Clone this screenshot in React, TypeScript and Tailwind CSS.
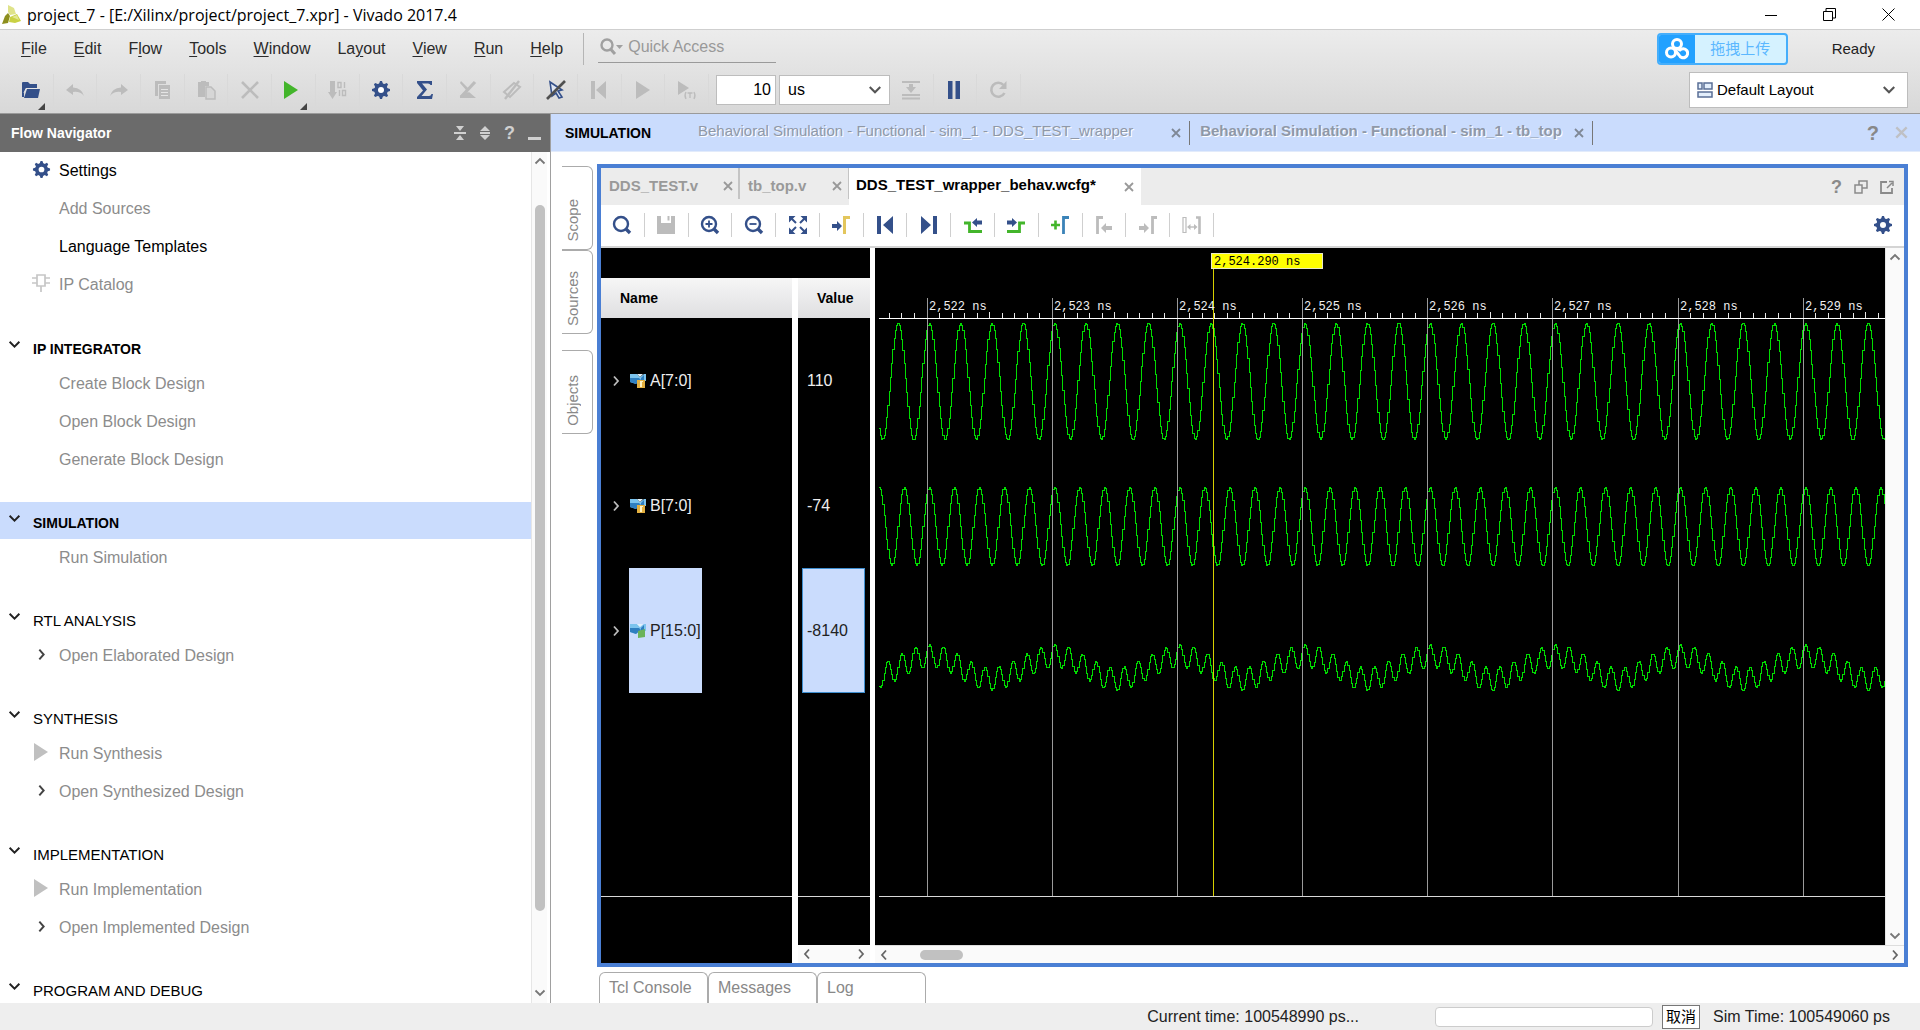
import type { ReactNode } from "react";

const NAVY = "#34508a";
const GREY = "#bcbcbc";
const GREEN = "#43b52b";

interface IconProps {
  children: ReactNode;
  size?: number;
}

const Icon = ({ children, size = 20 }: IconProps) => (
  <svg width={size} height={size} viewBox="0 0 20 20" fill="none" className="shrink-0" aria-hidden="true">
    {children}
  </svg>
);

const Gear = ({ size = 20 }: { size?: number }) => (
  <Icon size={size}>
    <g fill={NAVY}>
      {[0, 45, 90, 135].map((a) => (
        <path key={a} d="M8 4 L9 1 H11 L12 4 V16 L11 19 H9 L8 16 Z" transform={`rotate(${a} 10 10)`} />
      ))}
      <circle cx="10" cy="10" r="6.8" />
    </g>
    <circle cx="10" cy="10" r="3" fill="#fff" />
  </Icon>
);

const Chevron = ({ dir, color = "#555", size = 12 }: { dir: "up" | "down" | "left" | "right"; color?: string; size?: number }) => {
  const paths = {
    up: "M1.5 8.5 L6 4 L10.5 8.5",
    down: "M1.5 3.5 L6 8 L10.5 3.5",
    left: "M8 1.5 L4 6 L8 10.5",
    right: "M4 1.5 L8 6 L4 10.5",
  };
  return (
    <svg width={size} height={size} viewBox="0 0 12 12" fill="none" className="shrink-0" aria-hidden="true">
      <path d={paths[dir]} stroke={color} strokeWidth="1.8" />
    </svg>
  );
};

const Cross = ({ color = "#999", size = 10 }: { color?: string; size?: number }) => (
  <svg width={size} height={size} viewBox="0 0 10 10" aria-hidden="true">
    <path d="M1 1 L9 9 M9 1 L1 9" stroke={color} strokeWidth="1.8" />
  </svg>
);

const Logo = () => (
  <svg width="20" height="20" viewBox="0 0 20 20" aria-hidden="true">
    <path d="M6 0 L12 3 L14 9 L8 10 L6 7 Z" fill="#dfe38a" />
    <path d="M6 8 L8 11 L6 18 L0 19 L3 11 Z" fill="#8d8f1e" />
    <path d="M8 12 L15 9 L19 16 L13 18 L7 17 Z" fill="#c9d144" />
    <path d="M10 12 L15 10 L17 15 Z" fill="#e3e792" />
  </svg>
);

const menus = [
  ["", "F", "ile"],
  ["", "E", "dit"],
  ["F", "l", "ow"],
  ["", "T", "ools"],
  ["", "W", "indow"],
  ["La", "y", "out"],
  ["", "V", "iew"],
  ["", "R", "un"],
  ["", "H", "elp"],
];

const mainTools: { label: string; menu?: boolean; icon: ReactNode }[] = [
  {
    label: "Open",
    menu: true,
    icon: (
      <Icon>
        <path d="M1 3 Q1 2 2 2 H7 L9 4 H16 V8 H5 L3 13 V17 H1 Z" fill={NAVY} />
        <path d="M6 9 H19 L17 18 H3 Z" fill={NAVY} />
        <path d="M3 13 L5 8.5 H17" stroke="#e4e4e4" />
      </Icon>
    ),
  },
  {
    label: "Undo",
    icon: (
      <Icon>
        <path d="M8 4 L1 10 L8 15 V12 Q15 11 19 16 Q17 8 8 7.5 Z" fill={GREY} />
      </Icon>
    ),
  },
  {
    label: "Redo",
    icon: (
      <Icon>
        <path d="M12 4 L19 10 L12 15 V12 Q5 11 1 16 Q3 8 12 7.5 Z" fill={GREY} />
      </Icon>
    ),
  },
  {
    label: "Copy",
    icon: (
      <Icon>
        <path d="M3 1 H14 V4 H6 V16 H3 Z M7 5 H18 V19 H7 Z" fill={GREY} />
        <path d="M9 9.5 H16 M9 12.5 H16 M9 15.5 H16" stroke="#e4e4e4" />
      </Icon>
    ),
  },
  {
    label: "Paste",
    icon: (
      <Icon>
        <path d="M2 2 H5 V1 H10 V2 H13 V6 H9 V17 H2 Z" fill={GREY} />
        <path d="M10 7 H15 L19 11 V19 H10 Z" fill="#d6d6d6" stroke={GREY} strokeWidth="1.5" />
      </Icon>
    ),
  },
  {
    label: "Delete",
    icon: (
      <Icon>
        <path d="M2 2 L18 18 M18 2 L2 18" stroke={GREY} strokeWidth="2.6" />
      </Icon>
    ),
  },
  {
    label: "Run",
    menu: true,
    icon: (
      <Icon>
        <path d="M1 1 L15 10 L1 19 Z" fill={GREEN} />
      </Icon>
    ),
  },
  {
    label: "Program device",
    icon: (
      <Icon>
        <path d="M3 1 H8 V12 H10 L5.5 19 L1 12 H3 Z" fill={GREY} />
        <path d="M11 2.5 H14 V7.5 H11 Z M17.5 2 V8 M12.5 10 V16 M15.5 10.5 H18.5 V15.5 H15.5 Z" stroke={GREY} strokeWidth="1.4" />
      </Icon>
    ),
  },
  { label: "Settings", icon: <Gear /> },
  {
    label: "Report",
    icon: (
      <Icon>
        <path d="M2 1 H17 V5 H15.5 Q15 3.500 13 3.500 H7 L12 9.500 L6.5 16 H14 Q16 16 16.5 14 H18 L17 19 H2 V17 L8 10.5 L2 3 Z" fill={NAVY} />
      </Icon>
    ),
  },
  {
    label: "Clear edits",
    icon: (
      <Icon>
        <path d="M3 1 L11 9 L4 16 L11 12 L18 18 H2 V16 L8 10 L2 3 Z" fill={GREY} />
        <path d="M9 12 L17 18 H4 Z" fill={GREY} />
        <path d="M17 2 L3 17" stroke={GREY} strokeWidth="3.2" />
      </Icon>
    ),
  },
  {
    label: "Highlight",
    icon: (
      <Icon>
        <path d="M2 12 L12 3 L18 7 L8 17 Z" stroke={GREY} strokeWidth="2" />
        <path d="M17 1 L3 19" stroke={GREY} strokeWidth="2.4" />
      </Icon>
    ),
  },
  {
    label: "Unselect",
    icon: (
      <Icon>
        <path d="M4 2 L16 10 L12 11 L16 17 L13 18 L10 13 L6 16 Z" fill="#dfe6f3" stroke={NAVY} strokeWidth="1.6" />
        <path d="M19 1 L1 19" stroke="#505050" strokeWidth="2.6" />
      </Icon>
    ),
  },
  {
    label: "Restart",
    icon: (
      <Icon>
        <path d="M2 1 H6 V19 H2 Z M17 1 V19 L7 10 Z" fill={GREY} />
      </Icon>
    ),
  },
  {
    label: "Run all",
    icon: (
      <Icon>
        <path d="M3 1 L17 10 L3 19 Z" fill={GREY} />
      </Icon>
    ),
  },
  {
    label: "Run for time",
    icon: (
      <Icon>
        <path d="M1 1 L12 8 L1 15 Z" fill={GREY} />
        <path d="M9 12 Q7 15.5 9 19 M17 12 Q19 15.5 17 19 M10.5 13 H15.5 M13 13 V18" stroke={GREY} strokeWidth="1.3" />
      </Icon>
    ),
  },
];

const simTools: { label: string; icon: ReactNode }[] = [
  {
    label: "Step",
    icon: (
      <Icon>
        <path d="M1 2 H19 M1 15 H19 M1 18.5 H19" stroke={GREY} strokeWidth="1.8" />
        <path d="M8 4 H12 V7 H15 L10 13 L5 7 H8 Z" fill={GREY} />
      </Icon>
    ),
  },
  {
    label: "Break",
    icon: (
      <Icon>
        <path d="M3 1 H7.5 V19 H3 Z M10.5 1 H15 V19 H10.5 Z" fill={NAVY} />
      </Icon>
    ),
  },
  {
    label: "Relaunch",
    icon: (
      <Icon>
        <path d="M14.5 5 A7 7 0 1 0 15.5 13" stroke={GREY} strokeWidth="2.6" />
        <path d="M17.5 1 V9 H10 Z" fill={GREY} />
      </Icon>
    ),
  },
];

const Lens = ({ mark }: { mark?: string }) => (
  <Icon>
    <circle cx="9" cy="9" r="7" stroke={NAVY} strokeWidth="2.4" />
    <path d="M13.5 13.5 L18 18" stroke={NAVY} strokeWidth="3.4" />
    {mark && <path d={mark} stroke={NAVY} strokeWidth="1.8" />}
  </Icon>
);

const waveTools: { label: string; icon: ReactNode }[] = [
  { label: "Find", icon: <Lens /> },
  {
    label: "Save",
    icon: (
      <Icon>
        <path d="M1 1 H5 V8 H15 V1 H19 V19 H1 Z" fill={GREY} />
        <path d="M12.5 1 V5.5" stroke={GREY} strokeWidth="2" />
      </Icon>
    ),
  },
  { label: "Zoom in", icon: <Lens mark="M9 5.5 V12.5 M5.5 9 H12.5" /> },
  { label: "Zoom out", icon: <Lens mark="M5.5 9 H12.5" /> },
  {
    label: "Zoom fit",
    icon: (
      <Icon>
        <path d="M1 1 H7.5 L1 7.5 Z M19 1 V7.5 L12.5 1 Z M1 19 V12.5 L7.5 19 Z M19 19 H12.5 L19 12.5 Z" fill={NAVY} />
        <path d="M3 3 L8 8 M17 3 L12 8 M3 17 L8 12 M17 17 L12 12" stroke={NAVY} strokeWidth="2" />
      </Icon>
    ),
  },
  {
    label: "Go to cursor",
    icon: (
      <Icon>
        <path d="M1 9 H6 V6 L11 11 L6 16 V13 H1 Z" fill={NAVY} />
        <path d="M19 2.5 H13.5 V19" stroke="#e3c65c" strokeWidth="3" />
      </Icon>
    ),
  },
  {
    label: "Go to time 0",
    icon: (
      <Icon>
        <path d="M2 1 H6 V19 H2 Z M18 1 V19 L8 10 Z" fill={NAVY} />
      </Icon>
    ),
  },
  {
    label: "Go to last time",
    icon: (
      <Icon>
        <path d="M14 1 H18 V19 H14 Z M2 1 V19 L12 10 Z" fill={NAVY} />
      </Icon>
    ),
  },
  {
    label: "Previous transition",
    icon: (
      <Icon>
        <path d="M1 8 H6.5 V16.5 H19" stroke={GREEN} strokeWidth="2.8" />
        <path d="M9 7.5 L14 3 V5.5 H19 V9.5 H14 V12 Z" fill={NAVY} />
      </Icon>
    ),
  },
  {
    label: "Next transition",
    icon: (
      <Icon>
        <path d="M1 16.5 H13.5 V8 H19" stroke={GREEN} strokeWidth="2.8" />
        <path d="M11 7.5 L6 3 V5.5 H1 V9.5 H6 V12 Z" fill={NAVY} />
      </Icon>
    ),
  },
  {
    label: "Add marker",
    icon: (
      <Icon>
        <path d="M1 10 H10 M5.5 5.5 V14.5" stroke={GREEN} strokeWidth="2.6" />
        <path d="M19 2.5 H13.5 V19" stroke="#3b83b8" strokeWidth="2.8" />
      </Icon>
    ),
  },
  {
    label: "Previous marker",
    icon: (
      <Icon>
        <path d="M9 2.5 H3.5 V19" stroke={GREY} strokeWidth="2.8" />
        <path d="M7 13 L12 8 V11 H18 V15 H12 V18 Z" fill={GREY} />
      </Icon>
    ),
  },
  {
    label: "Next marker",
    icon: (
      <Icon>
        <path d="M19 2.5 H14.5 V19" stroke={GREY} strokeWidth="2.8" />
        <path d="M11 13 L6 8 V11 H1 V15 H6 V18 Z" fill={GREY} />
      </Icon>
    ),
  },
  {
    label: "Swap cursors",
    icon: (
      <Icon>
        <path d="M1 2.5 H4 V17.5 H1 Z" stroke={GREY} strokeWidth="1.2" />
        <path d="M14 2.5 H17.5 V19" stroke={GREY} strokeWidth="2.6" />
        <path d="M6 12 H14" stroke={GREY} strokeWidth="1.4" />
        <path d="M5 12 L8.5 9 V15 Z M15.5 12 L12 9 V15 Z" fill={GREY} />
      </Icon>
    ),
  },
];

const Play = () => (
  <svg width="16" height="18" viewBox="0 0 16 18" aria-hidden="true">
    <path d="M1 0 L15 9 L1 18 Z" fill="#c0c0c0" />
  </svg>
);

const Chip = () => (
  <svg width="18" height="20" viewBox="0 0 18 20" fill="none" aria-hidden="true">
    <path d="M5 2 H13 V13 H5 Z M0 5 H5 M0 10 H5 M13 5 H18 M13 10 H18 M9 13 V19" stroke="#c6c6c6" strokeWidth="1.7" />
  </svg>
);

interface NavItem {
  label: string;
  icon?: ReactNode;
  enabled?: boolean;
}

const topItems: NavItem[] = [
  { label: "Settings", icon: <Gear size={19} />, enabled: true },
  { label: "Add Sources" },
  { label: "Language Templates", enabled: true },
  { label: "IP Catalog", icon: <Chip /> },
];

const arrow = <Chevron dir="right" color="#444" size={13} />;

const sections: { title: string; bold?: boolean; active?: boolean; items: NavItem[] }[] = [
  {
    title: "IP INTEGRATOR",
    bold: true,
    items: [{ label: "Create Block Design" }, { label: "Open Block Design" }, { label: "Generate Block Design" }],
  },
  { title: "SIMULATION", bold: true, active: true, items: [{ label: "Run Simulation" }] },
  { title: "RTL ANALYSIS", items: [{ label: "Open Elaborated Design", icon: arrow }] },
  {
    title: "SYNTHESIS",
    items: [
      { label: "Run Synthesis", icon: <Play /> },
      { label: "Open Synthesized Design", icon: arrow },
    ],
  },
  {
    title: "IMPLEMENTATION",
    items: [
      { label: "Run Implementation", icon: <Play /> },
      { label: "Open Implemented Design", icon: arrow },
    ],
  },
  { title: "PROGRAM AND DEBUG", items: [] },
];

const NavRow = ({ label, icon, enabled }: NavItem) => (
  <button type="button" className="flex h-[38px] w-full items-center pl-8 text-left">
    <span className="flex w-[27px] items-center pb-1">
      <span className="flex w-[18px] justify-center">{icon}</span>
    </span>
    <span className={enabled ? "text-black" : "text-[#8c8c8c]"}>{label}</span>
  </button>
);

const TitleBar = () => (
  <header className="flex h-[30px] shrink-0 items-center border-b border-[#cfcfcf] bg-white pr-[25px] pl-[2px]">
    <Logo />
    <h1 className="flex-1 pl-[5px] font-['Open_Sans','Noto_Sans',sans-serif] text-[16px] text-black">
      project_7 - [E:/Xilinx/project/project_7.xpr] - Vivado 2017.4
    </h1>
    <div className="flex items-center gap-[46px]">
      <button type="button" aria-label="Minimize">
        <svg width="12" height="12" viewBox="0 0 12 12"><path d="M0 6.5 H12" stroke="#000" /></svg>
      </button>
      <button type="button" aria-label="Restore">
        <svg width="13" height="13" viewBox="0 0 13 13" fill="none">
          <path d="M0.5 3.5 H9.5 V12.5 H0.5 Z M3 3 V0.5 H12.5 V10 H10" stroke="#000" />
        </svg>
      </button>
      <button type="button" aria-label="Close">
        <svg width="13" height="13" viewBox="0 0 13 13"><path d="M0.5 0.5 L12.5 12.5 M12.5 0.5 L0.5 12.5" stroke="#000" /></svg>
      </button>
    </div>
  </header>
);

const MenuBar = () => (
  <div className="flex h-[38px] items-center">
    <nav className="flex gap-[27px] pl-[21px]">
      {menus.map(([before, key, after]) => (
        <button key={before + key + after} type="button" className="leading-6 text-[#2b2b2b]">
          {before}
          <span className="underline underline-offset-2">{key}</span>
          {after}
        </button>
      ))}
    </nav>
    <div className="ml-5 h-8 w-px bg-[#b5b5b5]" />
    <label className="ml-[14px] flex h-7 w-[178px] items-center border-b border-[#9a9a9a] pb-1 pl-[2px]">
      <svg width="24" height="18" viewBox="0 0 24 18" fill="none" aria-hidden="true">
        <circle cx="7" cy="7" r="5.5" stroke="#a0a0a0" strokeWidth="2.4" />
        <path d="M10.5 11 L15 16" stroke="#a0a0a0" strokeWidth="3" />
        <path d="M16 7 H23 L19.5 11 Z" fill="#a0a0a0" />
      </svg>
      <input type="text" aria-label="Quick Access" placeholder="Quick Access" className="ml-1 h-6 w-36 bg-transparent placeholder:text-[#999] outline-none" />
    </label>
    <div className="flex-1" />
    <button type="button" className="flex h-8 w-[131px] overflow-hidden rounded border-2 border-[#45aefb] bg-[#d5f2ff] text-[#5cb8ff]">
      <span className="flex h-full w-9 items-center justify-center bg-[#22a1ff]">
        <svg width="24" height="22" viewBox="0 0 24 22" fill="none" aria-hidden="true">
          <circle cx="12" cy="6" r="4.5" stroke="#fff" strokeWidth="3" />
          <circle cx="6" cy="14.5" r="4.5" stroke="#fff" strokeWidth="3" />
          <path d="M11 10 L15 12 A4.5 4.5 0 1 1 14 17 L10 12" stroke="#fff" strokeWidth="3" />
        </svg>
      </span>
      <span className="flex-1 self-center text-center text-[15px]">拖拽上传</span>
    </button>
    <span className="mr-[45px] ml-11 text-[15px] text-[#222]">Ready</span>
  </div>
);

const ToolBar = () => (
  <div className="flex h-[45px] items-center pr-3 pb-px pl-[10px]">
    <div className="grid w-[699px] grid-cols-[repeat(16,1fr)]">
      {mainTools.map(({ label, icon, menu }) => (
        <button key={label} type="button" aria-label={label} className="relative flex h-8 items-center justify-center border-r border-[#d9d9d9]">
          {icon}
          {menu && (
            <svg width="7" height="7" viewBox="0 0 7 7" className="absolute right-2 -bottom-1" aria-hidden="true">
              <path d="M7 0 V7 H0 Z" fill="#444" />
            </svg>
          )}
        </button>
      ))}
    </div>
    <input type="text" aria-label="Run time" defaultValue="10" className="ml-[7px] h-[30px] w-[60px] border border-[#bdbdbd] bg-white pr-1 text-right text-black outline-none" />
    <div className="relative ml-[3px]">
      <select aria-label="Time unit" className="h-[30px] w-[111px] appearance-none border border-[#bdbdbd] bg-white pl-2 text-black">
        <option>us</option>
      </select>
      <span className="pointer-events-none absolute top-2 right-2">
        <Chevron dir="down" size={14} />
      </span>
    </div>
    <div className="grid w-[131px] grid-cols-3">
      {simTools.map(({ label, icon }) => (
        <button key={label} type="button" aria-label={label} className="flex h-8 items-center justify-center border-r border-[#d9d9d9]">
          {icon}
        </button>
      ))}
    </div>
    <div className="flex-1" />
    <div className="relative">
      <svg width="16" height="16" viewBox="0 0 16 16" fill="#e3eefb" className="absolute top-[10px] left-2" aria-hidden="true">
        <path d="M1 1 H5 V7 H1 Z M7 1 H15 V7 H7 Z M1 10 H15 V15 H1 Z" stroke="#5a6f96" strokeWidth="1.5" />
      </svg>
      <select aria-label="Layout" className="h-9 w-[219px] appearance-none border border-[#bdbdbd] bg-white pl-[27px] text-[15px] text-black">
        <option>Default Layout</option>
      </select>
      <span className="pointer-events-none absolute top-[11px] right-3">
        <Chevron dir="down" size={14} />
      </span>
    </div>
  </div>
);

const FlowNavigator = () => (
  <aside className="flex w-[551px] shrink-0 flex-col border-r border-[#a0a0a0] bg-white">
    <div className="flex h-[38px] shrink-0 items-center bg-[#6b6b6b] pr-[9px] pb-px pl-[11px] text-[#e8e8e8]">
      <h2 className="flex-1 text-[14px] font-bold text-white">Flow Navigator</h2>
      <div className="flex items-center gap-[13px]">
        <button type="button" aria-label="Collapse all">
          <svg width="12" height="14" viewBox="0 0 12 14" fill="#d0d0d0"><path d="M2 0 H10 L6 5 Z M0 6 H12 V8 H0 Z M6 9 L10 14 H2 Z" /></svg>
        </button>
        <button type="button" aria-label="Expand all">
          <svg width="12" height="14" viewBox="0 0 12 14" fill="#d0d0d0"><path d="M6 0 L11 5 H1 Z M1 6 H11 V8 H1 Z M1 9 H11 L6 14 Z" /></svg>
        </button>
        <button type="button" className="text-lg font-bold text-[#d0d0d0]">?</button>
        <button type="button" aria-label="Minimize panel" className="mt-3 h-[3px] w-[13px] bg-[#d0d0d0]" />
      </div>
    </div>
    <div className="flex min-h-0 flex-1">
      <nav className="min-w-0 flex-1 overflow-hidden">
        <div className="mb-6">
          {topItems.map((item) => (
            <NavRow key={item.label} {...item} />
          ))}
        </div>
        {sections.map(({ title, bold, active, items }) => (
          <section key={title} className="mb-[23px]">
            <button type="button" className={`flex h-[37px] w-full items-center pl-2 text-left text-black ${active ? "bg-[#cadcfd]" : ""}`}>
              <span className="pb-1">
                <Chevron dir="down" color="#222" size={13} />
              </span>
              <span className={`pt-1 pl-3 ${bold ? "text-[14px] font-bold" : "text-[15px]"}`}>{title}</span>
            </button>
            {items.map((item) => (
              <NavRow key={item.label} {...item} />
            ))}
          </section>
        ))}
      </nav>
      <div className="mr-[3px] flex w-4 flex-col items-center border-l border-[#e6e6e6] bg-[#fafafa] pt-[3px] pb-1">
        <Chevron dir="up" color="#777" />
        <div className="mt-[38px] h-[706px] w-[10px] rounded-full bg-[#c1c1c1]" />
        <div className="flex-1" />
        <Chevron dir="down" color="#777" />
      </div>
    </div>
  </aside>
);

// Waveform canvas, in pixels: one nanosecond is NS wide, the first grid line is at X0
const NS = 125.17;
const X0 = 52;
const LEFT = 4;
const SPAN = 2400;
const times = Array.from({ length: 8 }, (_, i) => 2522 + i);

const trace = (mid: number, amp: number, fn: (t: number) => number) => {
  let d = "";
  for (let x = LEFT; x < SPAN; x += 1.25) {
    const t = ((x - X0 - 2) / NS) * 2 * Math.PI;
    const y = Math.round(mid - amp * fn(t)) + 0.5;
    d += d ? `H${x}V${y}` : `M${x} ${y}`;
  }
  return d;
};

const traces = [
  trace(133, 58, (t) => Math.cos(4 * t)),
  trace(278, 39, (t) => Math.cos(5 * t)),
  trace(419, 23, (t) => Math.cos(4 * t) * Math.cos(5 * t)),
];

const minorTicks = Array.from({ length: 190 }, (_, i) => i - 3).filter((i) => i % 10 !== 0);

const Waveform = () => (
  <svg className="h-full w-full bg-black" role="img" aria-label="Waveform">
    <g shapeRendering="crispEdges">
      {traces.map((d, i) => (
        <path key={i} d={d} fill="none" stroke="#00dc00" strokeWidth="1" />
      ))}
      {minorTicks.map((i) => (
        <rect key={i} x={Math.floor(X0 + (i * NS) / 10)} y={i % 5 === 0 ? 64 : 65} width="1" height="6" fill="#e8e8e8" />
      ))}
      {times.map((t, i) => (
        <rect key={t} x={Math.floor(X0 + i * NS)} y="50" width="1" height="598" fill="#9a9a9a" />
      ))}
      <rect x={LEFT} y="70" width={SPAN} height="1" fill="#fff" />
      <rect x={LEFT} y="648" width={SPAN} height="1" fill="#d8d8d8" />
      <rect x="338" y="21" width="1" height="627" fill="#d6cf00" />
      <rect x="336" y="5" width="111" height="15" fill="#ff0" stroke="#e8e8c8" />
    </g>
    <g className="font-['Liberation_Mono',monospace] text-[12px]" fill="#f0f0f0">
      {times.map((t, i) => (
        <text key={t} x={Math.floor(X0 + i * NS) + 2} y="62">
          {`2,${t - 2000} ns`}
        </text>
      ))}
      <text x="339" y="17" fill="#000">2,524.290 ns</text>
    </g>
  </svg>
);

const BusIcon = ({ output }: { output?: boolean }) => (
  <svg width="16" height="16" viewBox="0 0 16 16" aria-hidden="true">
    <path d="M0 1 H7 L10 4 L14 1 H16 V8 H8 L6 11 L0 9 Z" fill="#7cc4ee" />
    <path d="M0 5 H9 L11 7 L6 11 L0 9 Z M11 5 L14 2 V8 H11 Z" fill="#2f7fc0" />
    <path d="M7 1 L10 4 L13 1 Z" fill="#e3f3fc" />
    {output ? (
      <path d="M8 8 L15 6 V14 L8 15 Z" fill="#6bb35a" />
    ) : (
      <>
        <path d="M7 7 H15 V15 H7 Z" fill="#e3b040" />
        <path d="M10 8 H13 V9 H12 V14 H10 Z" fill="#fff3c4" />
      </>
    )}
  </svg>
);

const signals = [
  { name: "A[7:0]", value: "110" },
  { name: "B[7:0]", value: "-74" },
  { name: "P[15:0]", value: "-8140", selected: true },
];

const SignalTable = () => (
  <div className="flex w-[269px] shrink-0 flex-col bg-black">
    <table className="mt-[30px] w-full table-fixed border-collapse text-left">
      <thead>
        <tr className="text-[14px] text-black">
          <th className="w-[197px] p-0">
            <div className="flex h-10 items-center border-r-[6px] border-white bg-linear-to-b from-[#f6f6f6] to-[#dfdfe1] pl-[19px]">Name</div>
          </th>
          <th className="p-0">
            <div className="flex h-10 items-center bg-linear-to-b from-[#f6f6f6] to-[#dfdfe1] pl-[19px]">Value</div>
          </th>
        </tr>
      </thead>
      <tbody>
        {signals.map(({ name, value, selected }) => (
          <tr key={name}>
            <td className="p-0">
              <div className="flex h-[125px] items-center border-r-[6px] border-white pl-[9px]">
                <Chevron dir="right" color="#bbb" />
                <span className={`ml-[7px] flex h-full items-center gap-1 pr-px pl-px ${selected ? "bg-[#cadcfd] text-[#222]" : "text-[#eee]"}`}>
                  <BusIcon output={selected} />
                  {name}
                </span>
              </div>
            </td>
            <td className="p-0">
              <div className={`mr-[5px] ml-1 flex h-[125px] items-center border pl-1 ${selected ? "border-[#3f8fd0] bg-[#cadcfd] text-[#222]" : "border-black text-[#eee]"}`}>
                {value}
              </div>
            </td>
          </tr>
        ))}
      </tbody>
    </table>
    <div className="flex flex-1">
      <div className="w-[197px] border-r-[6px] border-white">
        <div className="h-[204px] border-b border-[#d8d8d8]" />
      </div>
      <div className="flex flex-1 flex-col">
        <div className="h-[204px] border-b border-[#d8d8d8]" />
        <div className="flex-1" />
        <div className="flex h-[18px] items-center justify-between bg-[#fafafa] px-[3px]">
          <Chevron dir="left" color="#666" />
          <Chevron dir="right" color="#666" />
        </div>
      </div>
    </div>
  </div>
);

const EditorTabs = () => (
  <div className="flex h-[37px] shrink-0 bg-[#ececec] font-bold text-[15px]">
    <div className="flex h-[31px] w-[139px] items-center justify-between border-r-2 border-[#c4c4c4] pt-1 pr-[5px] pl-2 text-[#999]">
      <button type="button">DDS_TEST.v</button>
      <button type="button" aria-label="Close DDS_TEST.v"><Cross /></button>
    </div>
    <div className="flex h-[31px] w-[109px] items-center justify-between border-r border-[#c4c4c4] pt-1 pr-[6px] pl-2 text-[#999]">
      <button type="button">tb_top.v</button>
      <button type="button" aria-label="Close tb_top.v"><Cross /></button>
    </div>
    <div className="flex w-[292px] items-center justify-between bg-white pr-[7px] pl-[7px] text-black">
      <button type="button" className="pb-1">DDS_TEST_wrapper_behav.wcfg*</button>
      <button type="button" aria-label="Close DDS_TEST_wrapper_behav.wcfg"><Cross /></button>
    </div>
    <div className="flex-1" />
    <div className="flex items-center gap-3 pt-px pr-[10px] text-[#8a8a8a]">
      <button type="button" className="text-lg">?</button>
      <button type="button" aria-label="Float">
        <svg width="14" height="14" viewBox="0 0 14 14" fill="none"><path d="M1 5 H8 V13 H1 Z M5 5 V1 H13 V8 H8" stroke="#8a8a8a" strokeWidth="1.5" /></svg>
      </button>
      <button type="button" aria-label="Maximize">
        <svg width="14" height="14" viewBox="0 0 14 14" fill="none"><path d="M7 2 H1 V13 H12 V8" stroke="#8a8a8a" strokeWidth="1.8" /><path d="M7 8 L12 3 M9 1.5 H13 V6" stroke="#8a8a8a" strokeWidth="1.5" /></svg>
      </button>
    </div>
  </div>
);

const WavePanel = () => (
  <div className="flex min-h-0 flex-1 flex-col border-4 border-[#4a7fd4] bg-white">
    <EditorTabs />
    <div className="flex h-[43px] shrink-0 items-center border-b-2 border-[#d4d4d4] pr-[11px] pb-px">
      <div className="grid w-[613px] grid-cols-[repeat(14,1fr)]">
        {waveTools.map(({ label, icon }) => (
          <button key={label} type="button" aria-label={label} className="flex h-6 items-center justify-center border-r border-[#cfcfcf]">
            {icon}
          </button>
        ))}
      </div>
      <div className="flex-1" />
      <button type="button" aria-label="Waveform settings"><Gear /></button>
    </div>
    <div className="flex min-h-0 flex-1">
      <SignalTable />
      <div className="ml-[5px] flex min-w-0 flex-1 flex-col">
        <div className="flex min-h-0 flex-1">
          <div className="min-w-0 flex-1 overflow-hidden bg-black">
            <Waveform />
          </div>
          <div className="flex w-[19px] flex-col items-center justify-between border-l border-[#e6e6e6] bg-[#fafafa] py-[3px]">
            <Chevron dir="up" color="#777" />
            <Chevron dir="down" color="#777" />
          </div>
        </div>
        <div className="flex h-[18px] shrink-0 items-center border-t border-[#ddd] bg-[#fafafa] px-[3px]">
          <Chevron dir="left" color="#666" />
          <div className="ml-[30px] h-[10px] w-[43px] rounded-full bg-[#c1c1c1]" />
          <div className="flex-1" />
          <Chevron dir="right" color="#666" />
        </div>
      </div>
    </div>
  </div>
);

const SideTab = ({ label }: { label: string }) => (
  <button type="button" className="flex h-[84px] w-[31px] items-end justify-center rounded-r-md border border-l-0 border-[#ababab] pr-2 pb-[7px] text-[15px] text-[#888]">
    <span className="rotate-180 [writing-mode:vertical-rl]">{label}</span>
  </button>
);

const SimulationArea = () => (
  <main className="flex min-w-0 flex-1 flex-col">
    <div className="flex h-[38px] shrink-0 items-center border-b border-[#e2ebfb] bg-[#cadcfd] pr-3 pl-[14px] text-[#8f98a8]">
      <h2 className="w-[133px] text-[14px] font-bold text-black">SIMULATION</h2>
      <div className="flex items-center gap-[38px] border-r border-[#777] pr-2">
        <button type="button" className="pb-1 text-[15px] text-shadow-[1px_1px_0_#fff]">Behavioral Simulation - Functional - sim_1 - DDS_TEST_wrapper</button>
        <button type="button" aria-label="Close DDS_TEST_wrapper simulation"><Cross color="#7f8896" /></button>
      </div>
      <div className="flex items-center gap-3 border-r border-[#777] pr-2 pl-[10px]">
        <button type="button" className="pb-1 text-[15px] font-bold text-shadow-[1px_1px_0_#fff]">Behavioral Simulation - Functional - sim_1 - tb_top</button>
        <button type="button" aria-label="Close tb_top simulation"><Cross color="#7f8896" /></button>
      </div>
      <div className="flex-1" />
      <button type="button" className="text-xl font-bold text-[#888]">?</button>
      <button type="button" aria-label="Close simulation" className="ml-4"><Cross color="#bfc0c4" size={13} /></button>
    </div>
    <div className="flex min-h-0 flex-1 pt-3 pr-3 pl-[11px]">
      <div className="flex flex-col pt-[2px]">
        <SideTab label="Scope" />
        <SideTab label="Sources" />
        <div className="h-4" />
        <SideTab label="Objects" />
      </div>
      <div className="ml-1 flex min-w-0 flex-1 flex-col">
        <WavePanel />
        <div className="mt-[5px] flex h-[31px] shrink-0 pl-[2px] text-[#888]">
          {["Tcl Console", "Messages", "Log"].map((tab) => (
            <button key={tab} type="button" className="w-[109px] rounded-t-md border border-b-0 border-[#ababab] pl-[9px] text-left">
              {tab}
            </button>
          ))}
        </div>
      </div>
    </div>
  </main>
);

const StatusBar = () => (
  <footer className="flex h-[27px] shrink-0 items-center justify-end bg-[#eee] pr-[30px] text-[#222]">
    <span>Current time: 100548990 ps...</span>
    <div role="progressbar" aria-label="Simulation progress" className="ml-[76px] h-5 w-[218px] rounded border border-[#ccc] bg-white" />
    <button type="button" className="ml-[9px] h-6 w-[38px] border border-[#777] bg-white text-[15px] text-black">取消</button>
    <span className="ml-[13px]">Sim Time: 100549060 ps</span>
  </footer>
);

const App = () => (
  <div className="flex h-screen flex-col overflow-hidden bg-white font-['Liberation_Sans','Noto_Sans_CJK_SC',sans-serif] text-base leading-5">
    <TitleBar />
    <div className="shrink-0 border-b border-[#9a9a9a] bg-linear-to-b from-[#ececec] to-[#d8d8d8]">
      <MenuBar />
      <ToolBar />
    </div>
    <div className="flex min-h-0 flex-1">
      <FlowNavigator />
      <SimulationArea />
    </div>
    <StatusBar />
  </div>
);

export default App;
